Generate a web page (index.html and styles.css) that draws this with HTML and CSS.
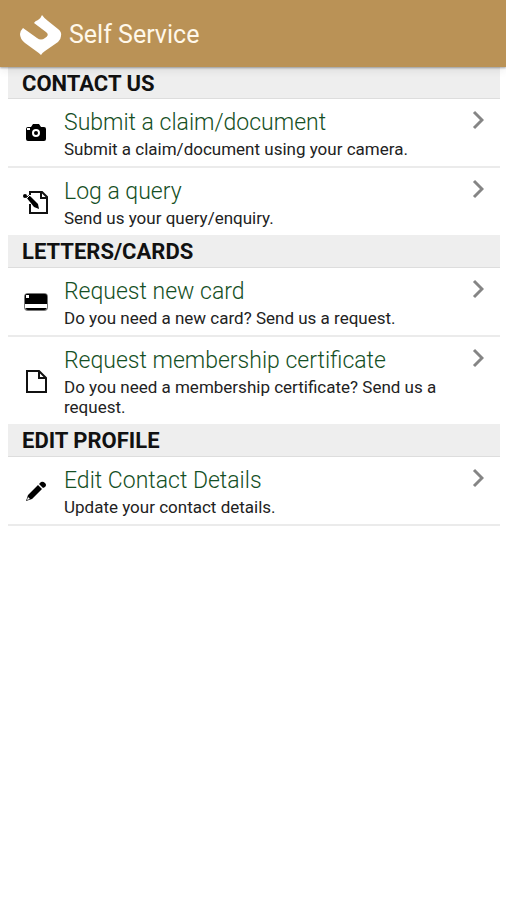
FILE: index.html
```html
<!DOCTYPE html>
<html lang="en">
<head>
<meta charset="utf-8">
<meta name="viewport" content="width=device-width, initial-scale=1">
<title>Self Service</title>
<link rel="stylesheet" href="styles.css">
</head>
<body>
<header class="app-bar">
  <svg class="logo" viewBox="0 0 42 40" aria-hidden="true"><path d="M22 0Q24 3 28 6L38 14Q42 17 41 21Q41 24 38 27L25 36Q22 38 21 40Q19 38 16 36L5 28Q0 24 0 19Q0 16 3 13L17 23Q21 26 25 23Q30 20 26 17L14 8Q15 6 18 5Q21 3 22 0Z"/></svg>
  <h1 class="app-title">Self Service</h1>
</header>
<main class="content">
  <section>
    <h2 class="heading heading-first">CONTACT US</h2>
    <ul class="list">
      <li><a class="row" href="#claim">
        <svg class="icon" viewBox="0 0 28 28" aria-hidden="true"><path fill-rule="evenodd" d="M6 8h3l2-3h6l2 3h3q2 0 2 2v10q0 2-2 2H6q-2 0-2-2V10q0-2 2-2ZM14 10a4 4 0 1 0 0 8 4 4 0 0 0 0-8ZM5 9v2h3V9Z"/><circle cx="14" cy="14" r="2"/></svg>
        <span class="text"><span class="title">Submit a claim/document</span><span class="detail">Submit a claim/document using your camera.</span></span>
        <svg class="chevron" viewBox="0 0 12 20" aria-hidden="true"><path d="M2 2l8 8-8 8"/></svg>
      </a></li>
      <li><a class="row" href="#query">
        <svg class="icon" viewBox="0 0 28 28" aria-hidden="true"><path class="line" d="M8 7V4h12l5 5v16H8v-9M19 4v6h6"/><circle cx="3" cy="8" r="2"/><path d="M4 9l3-2 9 9 1 5-5-2Z"/><path d="M4 11l4-4" stroke="#fff"/></svg>
        <span class="text"><span class="title">Log a query</span><span class="detail">Send us your query/enquiry.</span></span>
        <svg class="chevron" viewBox="0 0 12 20" aria-hidden="true"><path d="M2 2l8 8-8 8"/></svg>
      </a></li>
    </ul>
  </section>
  <section>
    <h2 class="heading">LETTERS/CARDS</h2>
    <ul class="list">
      <li><a class="row" href="#card">
        <svg class="icon" viewBox="0 0 28 28" aria-hidden="true"><rect x="2" y="5" width="24" height="18" rx="4" fill="#777"/><path d="M3 8q0-2 2-2h18q2 0 2 2v8H3Z"/><path fill="#fff" d="M3 16h22v4H3zM4 7h3v3H4z"/><path d="M4 20h20v1q-1 1-2 1H6q-2 0-2-2Z"/></svg>
        <span class="text"><span class="title">Request new card</span><span class="detail">Do you need a new card? Send us a request.</span></span>
        <svg class="chevron" viewBox="0 0 12 20" aria-hidden="true"><path d="M2 2l8 8-8 8"/></svg>
      </a></li>
      <li><a class="row" href="#certificate">
        <svg class="icon" viewBox="0 0 28 28" aria-hidden="true"><path class="line" d="M5 4h12l7 7v14H5ZM17 4v7h7"/></svg>
        <span class="text"><span class="title">Request membership certificate</span><span class="detail">Do you need a membership certificate? Send us a request.</span></span>
        <svg class="chevron" viewBox="0 0 12 20" aria-hidden="true"><path d="M2 2l8 8-8 8"/></svg>
      </a></li>
    </ul>
  </section>
  <section>
    <h2 class="heading">EDIT PROFILE</h2>
    <ul class="list list-last">
      <li><a class="row" href="#details">
        <svg class="icon" viewBox="0 0 28 28" aria-hidden="true"><path d="M4 24l2-6L16 8l4 4L10 22ZM17 7l2-2q2-1 4 1t0 4l-2 1Z"/><path fill="#fff" d="M6 20l2 2-3 1Z"/></svg>
        <span class="text"><span class="title">Edit Contact Details</span><span class="detail">Update your contact details.</span></span>
        <svg class="chevron" viewBox="0 0 12 20" aria-hidden="true"><path d="M2 2l8 8-8 8"/></svg>
      </a></li>
    </ul>
  </section>
</main>
</body>
</html>
```
FILE: styles.css
```css
* {
  box-sizing: border-box;
}

body {
  margin: 0;
  background: #fff;
  color: #222;
  font-family: Roboto, "Liberation Sans", sans-serif;
}

.app-bar {
  position: relative;
  display: flex;
  align-items: center;
  gap: 7px;
  height: 67px;
  padding: 2px 20px 0;
  background: #ba9256;
  box-shadow: 0 1px 2px #0005, 0 4px 8px #0001;
}

.logo {
  width: 42px;
  height: 40px;
  fill: #fff;
}

.app-title {
  margin: 0;
  color: #fff8ea;
  font-size: 25px;
  font-weight: 400;
  line-height: 32px;
}

.content {
  padding: 0 6px 0 8px;
}

.heading {
  margin: 0;
  padding: 4px 14px 2px;
  border-bottom: 1px solid #ddd;
  background: #eee;
  color: #111;
  font-size: 22px;
  font-weight: 700;
  line-height: 26px;
}

.heading-first {
  padding-bottom: 1px;
}

.list {
  margin: 0;
  padding: 0;
  list-style: none;
}

.list li + li {
  border-top: 2px solid #ebebeb;
}

.list-last {
  border-bottom: 2px solid #ebebeb;
}

.row {
  display: flex;
  align-items: center;
  gap: 14px;
  padding: 10px 16px 7px 14px;
  color: inherit;
  text-decoration: none;
}

.icon {
  flex: none;
  width: 28px;
  height: 28px;
  margin-bottom: 2px;
}

.line {
  fill: none;
  stroke: #111;
  stroke-width: 2;
}

.text {
  display: flex;
  flex: 1;
  flex-direction: column;
  gap: 2px;
  padding-right: 16px;
}

.title {
  color: #154f25;
  font-size: 23px;
  font-weight: 350;
  line-height: 28px;
}

.detail {
  font-size: 17px;
  line-height: 20px;
}

.chevron {
  flex: none;
  align-self: flex-start;
  width: 12px;
  height: 20px;
  margin-top: 1px;
  fill: none;
  stroke: #858585;
  stroke-width: 3;
}
```
